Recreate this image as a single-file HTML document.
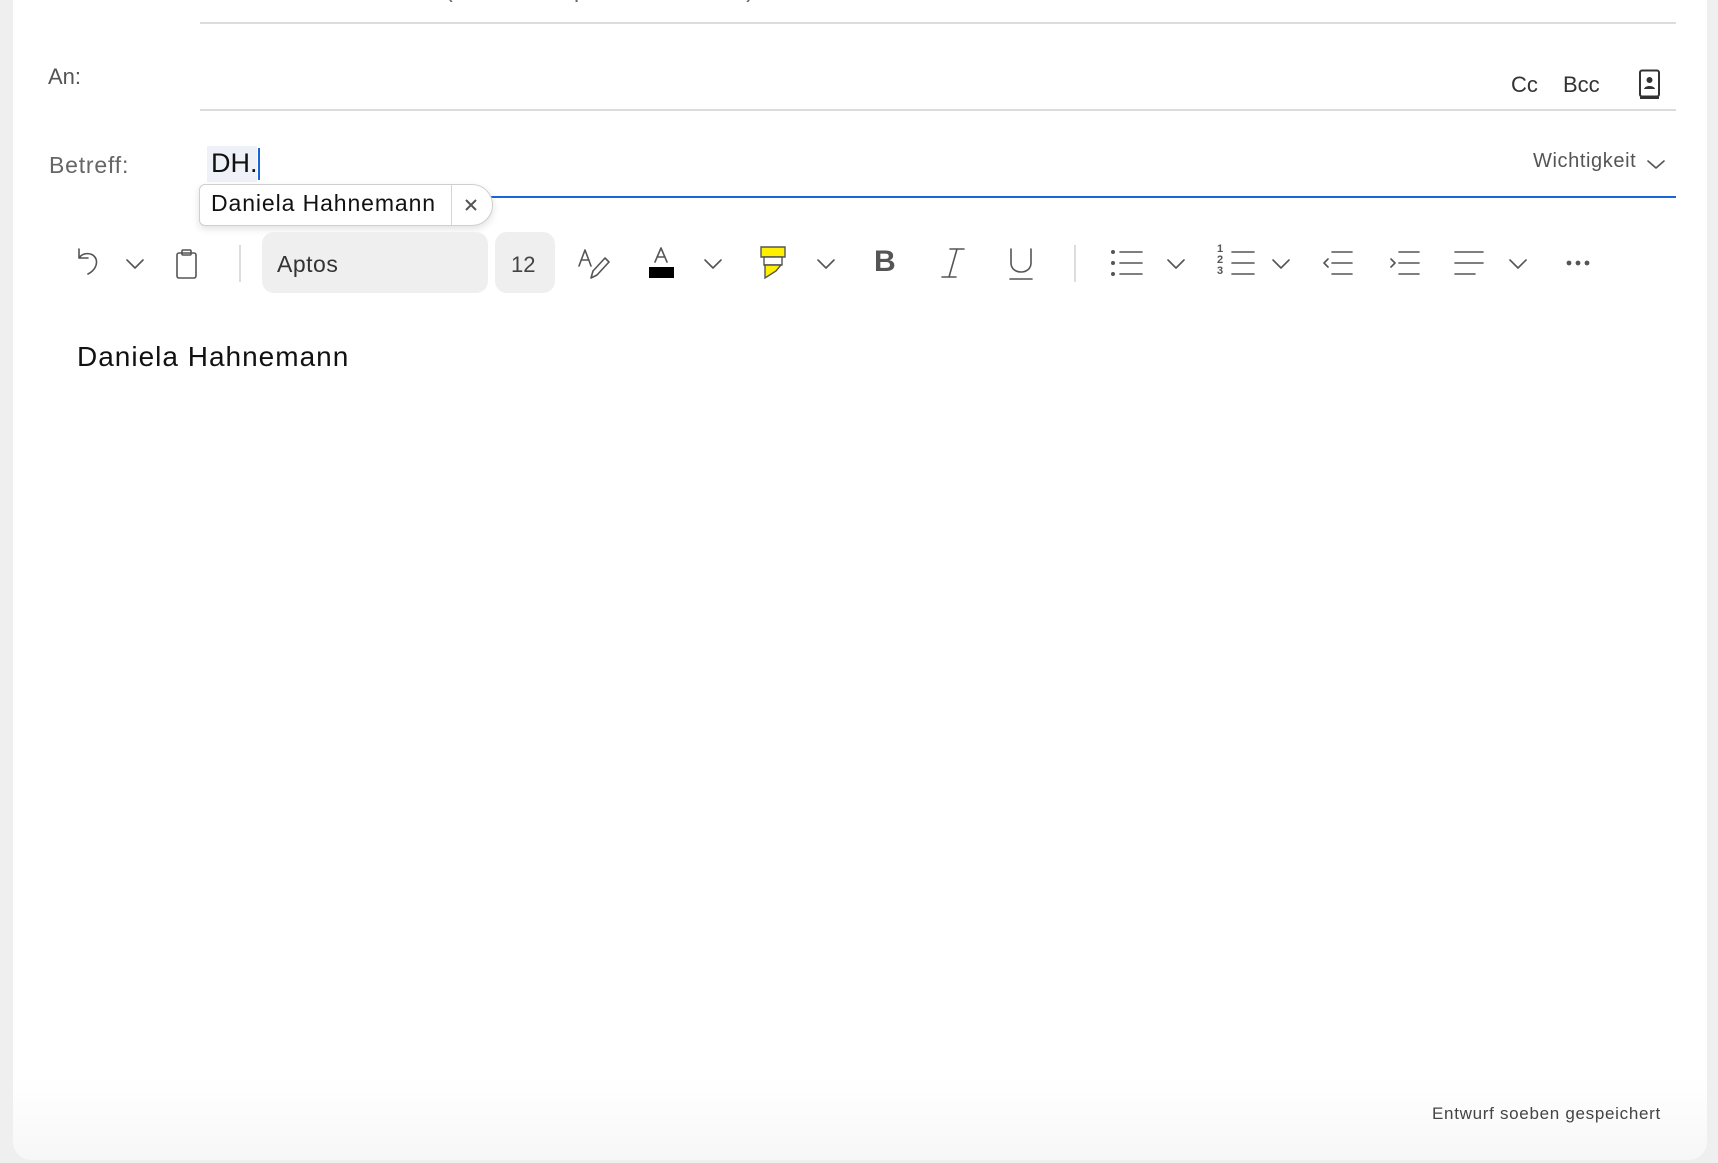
<!DOCTYPE html>
<html><head><meta charset="utf-8"><style>
*{margin:0;padding:0;box-sizing:border-box}
body{width:1718px;height:1163px;background:#efefef;position:relative;overflow:hidden;font-family:"Liberation Sans",sans-serif;color:#222}
.card{position:absolute;left:13px;top:-20px;width:1694px;height:1180px;background:linear-gradient(#fff 93%,#f7f7f7);border-radius:0 0 18px 18px}
.a{position:absolute;white-space:nowrap}
.line{position:absolute;height:2px;background:#dcdcdc}
svg{position:absolute;overflow:visible}
.ic{stroke:#555;fill:none;stroke-width:1.6;stroke-linecap:round;stroke-linejoin:round}
</style></head><body>
<div class="card"></div>
<div class="a" style="left:48px;top:-24px;font-size:23px;color:#666">Von:</div>
<div class="a" style="left:211px;top:-24px;font-size:23px;color:#666;letter-spacing:1px">Daniela Hahnemann (dh@...beispiel-adresse.de)</div>
<div class="line" style="left:200px;top:22px;width:1476px"></div>
<div class="a" style="left:48px;top:64px;font-size:22px;color:#555">An:</div>
<div class="a" style="left:1511px;top:72px;font-size:22px;color:#333">Cc</div>
<div class="a" style="left:1563px;top:72px;font-size:22px;color:#333">Bcc</div>
<svg style="left:1638px;top:69px" width="24" height="31"><rect x="2" y="1.5" width="19" height="26" rx="2" fill="none" stroke="#333" stroke-width="2"/><circle cx="11.5" cy="11" r="3" fill="#333"/><path d="M6 20c1-4 10-4 11 0z" fill="#333"/><path d="M2 29h19" stroke="#333" stroke-width="2"/></svg>
<div class="line" style="left:200px;top:109px;width:1476px"></div>
<div class="a" style="left:49px;top:152px;font-size:23px;color:#666;letter-spacing:0.8px">Betreff:</div>
<div class="a" style="left:207px;top:146px;width:50px;height:36px;background:#eef2f8"></div>
<div class="a" style="left:211px;top:148px;font-size:27px;color:#111">DH.</div>
<div class="a" style="left:258px;top:148px;width:2px;height:32px;background:#1a66d6"></div>
<div class="a" style="left:1533px;top:150px;font-size:20px;color:#555;letter-spacing:0.6px">Wichtigkeit</div>
<svg style="left:1647px;top:158px" width="18" height="12"><path class="ic" d="M1 3l8 7 8-7" stroke="#444"/></svg>
<div class="a" style="left:200px;top:196px;width:1476px;height:2px;background:#1a66d6"></div>
<div class="a" style="left:199px;top:184px;width:294px;height:42px;background:#fff;border:1px solid #cfcfcf;border-radius:6px 21px 21px 6px;box-shadow:0 3px 8px rgba(0,0,0,.12)"></div>
<div class="a" style="left:451px;top:185px;width:1px;height:40px;background:#d5d5d5"></div>
<div class="a" style="left:211px;top:190px;font-size:23px;color:#111;letter-spacing:0.9px">Daniela Hahnemann</div>
<svg style="left:465px;top:199px" width="12" height="12"><path d="M1 1l10 10M11 1L1 11" stroke="#555" stroke-width="2"/></svg>
<!-- toolbar -->
<svg style="left:76px;top:247px" width="28" height="32"><path class="ic" d="M3 2v9h9M3 11c4-6 14-6 17 1 2 6-2 12-8 15" stroke="#555"/></svg>
<svg style="left:126px;top:258px" width="18" height="12"><path class="ic" d="M1 2l8 8 8-8"/></svg>
<svg style="left:175px;top:248px" width="24" height="32"><rect class="ic" x="2" y="5" width="19" height="25" rx="2"/><rect class="ic" x="7" y="2" width="9" height="5" rx="1"/></svg>
<div class="a" style="left:239px;top:245px;width:2px;height:37px;background:#ddd"></div>
<div class="a" style="left:262px;top:232px;width:226px;height:61px;background:#efefef;border-radius:12px"></div>
<div class="a" style="left:277px;top:251px;font-size:23px;color:#333;letter-spacing:0.5px">Aptos</div>
<div class="a" style="left:495px;top:232px;width:60px;height:61px;background:#efefef;border-radius:12px"></div>
<div class="a" style="left:511px;top:252px;font-size:22px;color:#444">12</div>
<svg style="left:577px;top:248px" width="34" height="32"><path class="ic" d="M2 18L8 2l6 16M4 12h8M14 30l2-7 12-13 4 4-12 13zM22 26" /></svg>
<svg style="left:648px;top:246px" width="28" height="34"><path class="ic" d="M7 16L13 2l6 14M9 11h8"/><rect x="1" y="21" width="25" height="11" fill="#000"/></svg>
<svg style="left:704px;top:258px" width="18" height="12"><path class="ic" d="M1 2l8 8 8-8"/></svg>
<svg style="left:760px;top:246px" width="26" height="34"><path d="M1 1h24v10H1z" fill="#ffef00" stroke="#555" stroke-width="1.4"/><path d="M4 11h18v8H4z" fill="#fff" stroke="#555" stroke-width="1.4"/><path d="M5 19h16l-5 6-11 7z" fill="#ffef00" stroke="#555" stroke-width="1.4"/></svg>
<svg style="left:817px;top:258px" width="18" height="12"><path class="ic" d="M1 2l8 8 8-8"/></svg>
<div class="a" style="left:874px;top:245px;font-size:30px;font-weight:bold;color:#555">B</div>
<svg style="left:940px;top:247px" width="26" height="32"><path class="ic" d="M10 2h14M2 30h14M17 2L9 30"/></svg>
<svg style="left:1008px;top:247px" width="26" height="34"><path class="ic" d="M3 2v14c0 12 20 12 20 0V2M2 32h22"/></svg>
<div class="a" style="left:1074px;top:245px;width:2px;height:37px;background:#ddd"></div>
<svg style="left:1110px;top:249px" width="34" height="28"><g fill="#555"><circle cx="3" cy="3" r="2"/><circle cx="3" cy="14" r="2"/><circle cx="3" cy="25" r="2"/></g><path class="ic" d="M10 3h22M10 14h22M10 25h22"/></svg>
<svg style="left:1167px;top:258px" width="18" height="12"><path class="ic" d="M1 2l8 8 8-8"/></svg>
<div class="a" style="left:1217px;top:244px;font-size:11px;line-height:11px;color:#555;font-weight:bold">1<br>2<br>3</div>
<svg style="left:1229px;top:249px" width="28" height="28"><path class="ic" d="M3 3h22M3 14h22M3 25h22"/></svg>
<svg style="left:1272px;top:258px" width="18" height="12"><path class="ic" d="M1 2l8 8 8-8"/></svg>
<svg style="left:1322px;top:249px" width="32" height="28"><path class="ic" d="M10 3h20M10 14h20M10 25h20M6 10l-4 4 4 4"/></svg>
<svg style="left:1389px;top:249px" width="32" height="28"><path class="ic" d="M10 3h20M10 14h20M10 25h20M2 10l4 4-4 4"/></svg>
<svg style="left:1453px;top:249px" width="32" height="28"><path class="ic" d="M2 3h28M2 14h28M2 25h20"/></svg>
<svg style="left:1509px;top:258px" width="18" height="12"><path class="ic" d="M1 2l8 8 8-8"/></svg>
<svg style="left:1566px;top:260px" width="26" height="6"><g fill="#555"><circle cx="3" cy="3" r="2.4"/><circle cx="12" cy="3" r="2.4"/><circle cx="21" cy="3" r="2.4"/></g></svg>
<div class="a" style="left:77px;top:341px;font-size:28px;color:#111;letter-spacing:1px">Daniela Hahnemann</div>
<div class="a" style="left:1432px;top:1104px;font-size:17px;color:#444;letter-spacing:0.7px">Entwurf soeben gespeichert</div>
</body></html>
